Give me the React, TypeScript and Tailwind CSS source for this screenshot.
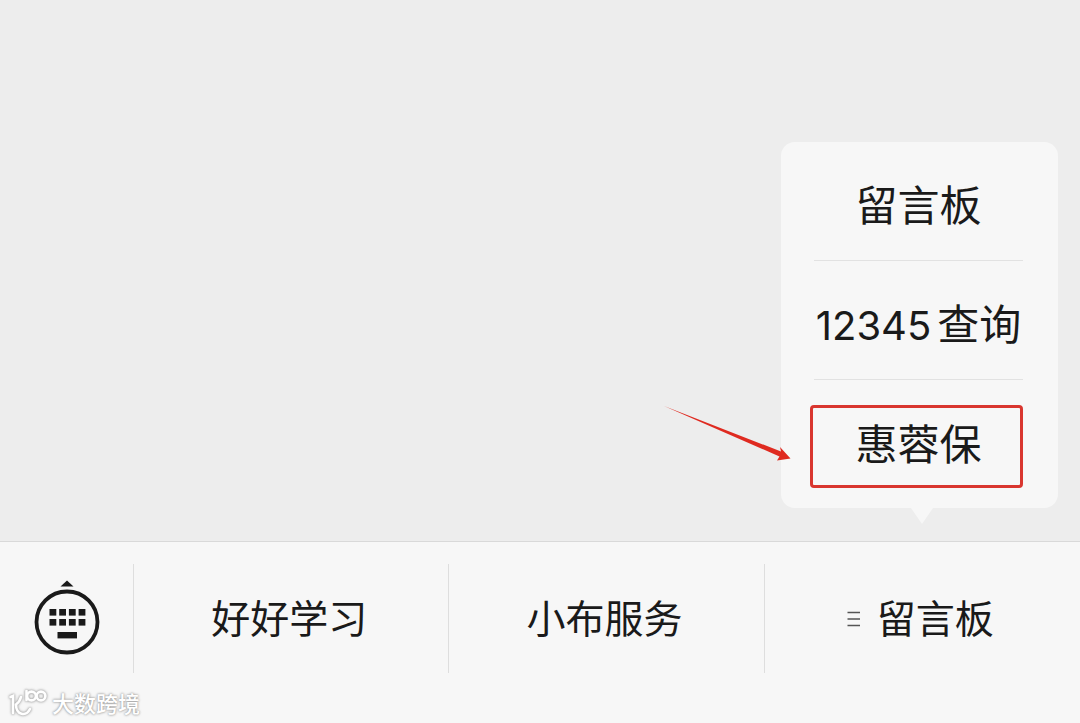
import React from 'react';

function KeyboardIcon() {
  return (
    <svg width="66" height="76" viewBox="0 0 66 76" fill="#1a1a1a" aria-hidden="true">
      <path d="M33 0.5 L39.5 6.5 H26.5 Z" />
      <circle cx="33" cy="42" r="30.5" fill="none" stroke="#1a1a1a" strokeWidth="3.8" />
      {[29, 39].map((y) =>
        [15.5, 25.2, 34.9, 44.6].map((x) => (
          <rect key={`${x}-${y}`} x={x} y={y} width="6.8" height="6.6" />
        )),
      )}
      <rect x="23.5" y="52" width="19.5" height="6.4" />
    </svg>
  );
}

function MenuLines() {
  return (
    <svg width="14" height="16" viewBox="0 0 14 16" stroke="#555" strokeWidth="1.4" aria-hidden="true">
      <path d="M0.5 1.5H13M0.5 8H13M0.5 14.5H13" />
    </svg>
  );
}

function PointerArrow() {
  return (
    <svg
      className="absolute right-[267px] bottom-[45px]"
      width="128"
      height="60"
      viewBox="0 0 128 60"
      aria-hidden="true"
    >
      <path d="M1 3 L118 48.5 L117 44 L127.5 55.5 L114 57.5 L116.5 53.5 Z" fill="#df2a20" />
    </svg>
  );
}

function SubmenuItem({ children }: { children: React.ReactNode }) {
  return (
    <button
      type="button"
      className="flex w-full items-baseline justify-center gap-1.5 border-b border-[#e2e2e2] pt-[34px] pb-[24px] whitespace-nowrap"
    >
      {children}
    </button>
  );
}

function Submenu() {
  return (
    <div className="absolute right-[22px] bottom-full mb-14 w-[277px] rounded-[14px] bg-[#f7f7f7] pr-[35px] pl-[33px] text-[42px] leading-[60px]">
      <SubmenuItem>留言板</SubmenuItem>
      <SubmenuItem>
        <span className="text-[40px] leading-none">12345</span>
        <span>查询</span>
      </SubmenuItem>
      <div className="-ml-1 pt-[25px] pb-5">
        <button
          type="button"
          className="block h-[83px] w-full rounded-[4px] border-3 border-[#d9362f] pb-1 pl-1 text-center"
        >
          惠蓉保
        </button>
      </div>
      <svg
        className="absolute top-full left-[130px]"
        width="22"
        height="16"
        viewBox="0 0 22 16"
        aria-hidden="true"
      >
        <path d="M0 0H22L11 16Z" fill="#f7f7f7" />
      </svg>
      <PointerArrow />
    </div>
  );
}

function Watermark() {
  return (
    <div className="flex h-[50px] items-center gap-1 pt-3 pl-2 text-[22px] leading-[30px] font-medium text-white [text-shadow:0_0_2px_#999,0_0_3px_#aaa]">
      <svg
        className="[filter:drop-shadow(0_0_1px_#aaa)_drop-shadow(0_0_1px_#bbb)]"
        width="40"
        height="30"
        viewBox="0 0 40 30"
        fill="none"
        stroke="#fff"
        strokeWidth="2.6"
        strokeLinecap="round"
        aria-hidden="true"
      >
        <path d="M2.5 8 L5 7 V24 M13 8 C12 12 10 14 8 15.5 C8 26 18 28 22 20" />
        <path d="M18.5 2V11" />
        <circle cx="23.5" cy="7" r="4.4" />
        <circle cx="33" cy="7" r="4.4" />
      </svg>
      <span>大数跨境</span>
    </div>
  );
}

export default function App() {
  return (
    <div className="flex min-h-screen flex-col bg-[#ededed] font-[Inter,'Noto_Sans_CJK_SC',sans-serif] text-[#1a1a1a]">
      <main className="flex-1" />
      <footer className="border-t border-[#d9d9d9] bg-[#f7f7f7] pt-[22px]">
        <nav className="grid h-[109px] grid-cols-[134px_1fr_1fr_1fr] divide-x divide-[#dedede] text-[39px] leading-[56px]">
          <button
            type="button"
            aria-label="键盘"
            className="flex items-center justify-center pb-0.5"
          >
            <KeyboardIcon />
          </button>
          <button type="button" className="pr-1">
            好好学习
          </button>
          <button type="button" className="pr-1">
            小布服务
          </button>
          <div className="relative flex">
            <button type="button" className="flex flex-1 items-center justify-center gap-4 pr-1">
              <MenuLines />
              <span>留言板</span>
            </button>
            <Submenu />
          </div>
        </nav>
        <Watermark />
      </footer>
    </div>
  );
}
